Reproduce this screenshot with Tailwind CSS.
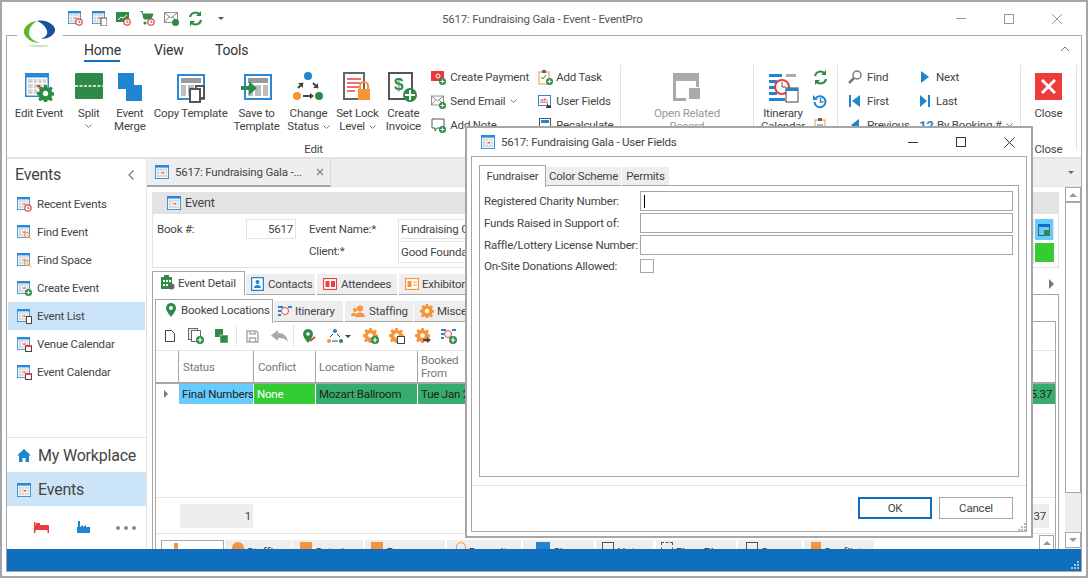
<!DOCTYPE html>
<html lang="en">
<head>
<meta charset="UTF-8">
<title>5617: Fundraising Gala - Event - EventPro</title>
<script src="https://cdn.jsdelivr.net/npm/@tailwindcss/browser@4"></script>
</head>
<body class="bg-white">
<svg width="0" height="0" class="absolute">
  <defs>
    <symbol id="cal" viewBox="0 0 16 16">
      <rect x="0.5" y="0.5" width="15" height="15" fill="#fff" stroke="#2b88d8"/>
      <rect x="0" y="0" width="16" height="3" fill="#2b88d8"/>
      <path d="M2 4h12v10H2z" fill="#d2d2d2"/>
      <path d="M2 7h12M2 10.500h12M5.500 4v10M8.500 4v10M11.500 4v10" stroke="#fff" stroke-width="0.8"/>
      <rect x="8" y="8" width="2" height="1.500" fill="#e84040"/>
    </symbol>
    <symbol id="plus" viewBox="0 0 10 10">
      <circle cx="5" cy="5" r="5" fill="#2e8b47"/>
      <path d="M5 2v6M2 5h6" stroke="#fff" stroke-width="1.500"/>
    </symbol>
    <symbol id="clock" viewBox="0 0 10 10">
      <circle cx="5" cy="5" r="4" fill="#fff" stroke="#e84040" stroke-width="1.500"/>
      <path d="M5 3v2.500h2" stroke="#555" fill="none"/>
    </symbol>
    <symbol id="frame" viewBox="0 0 28 26">
      <rect x="1" y="1" width="26" height="24" fill="#fff" stroke="#2b88d8" stroke-width="2"/>
      <rect x="4" y="4" width="20" height="5" fill="#9a9a9a"/>
      <path d="M4 11h5v11H4zM11 11h6v11h-6zM19 11h5v11h-5z" fill="#bdbdbd"/>
    </symbol>
    <symbol id="gear" viewBox="0 0 16 16">
      <path d="M6.700 0h2.600l.4 2.200 1.500.6 1.900-1.300 1.800 1.800-1.300 1.900.6 1.500 2.200.4v2.600l-2.200.4-.6 1.500 1.300 1.900-1.800 1.800-1.900-1.300-1.500.6-.4 2.200H6.700l-.4-2.200-1.500-.6-1.900 1.300-1.800-1.800 1.300-1.900-.6-1.500L0 9.300V6.700l2.200-.4.6-1.500-1.300-1.900 1.800-1.800 1.900 1.300 1.500-.6z"/>
      <circle cx="8" cy="8" r="2.500" fill="#fff"/>
    </symbol>
    <symbol id="mail" viewBox="0 0 16 12">
      <rect x="0.500" y="0.500" width="15" height="11" fill="#fff" stroke="#777"/>
      <path d="M1 1l7 5.500L15 1M1 11l5-6M15 11l-5-6" stroke="#777" fill="none"/>
    </symbol>
  </defs>
</svg>

<div class="relative w-[1088px] h-[578px] overflow-hidden border-2 border-[#a6a6a6] bg-white text-[11.500px] tracking-[-0.2px] leading-[14px] text-[#444] font-[Roboto,sans-serif]">

  <!-- title bar -->
  <div class="flex items-center h-[33px] pl-[66px]">
    <div class="flex items-center gap-[9px] h-[33px] -mt-[1px]">
      <svg width="15" height="15" viewBox="0 0 15 15"><use href="#cal" width="13" height="13"/><use href="#clock" x="7" y="7" width="8" height="8"/></svg>
      <svg width="15" height="15" viewBox="0 0 15 15"><use href="#cal" width="13" height="13"/><rect x="9" y="7" width="6" height="8" fill="#fff" stroke="#555"/></svg>
      <svg width="15" height="15" viewBox="0 0 15 15"><rect y="1" width="13" height="10" fill="#2e8b47"/><path d="M2 9l3-3 2 1 4-3" stroke="#fff" fill="none"/><use href="#clock" x="7" y="7" width="8" height="8"/></svg>
      <svg width="15" height="15" viewBox="0 0 15 15"><path d="M0 0h2l2 8h7l2-5H4" fill="#2e8b47" stroke="#2e8b47"/><circle cx="5" cy="12" r="1.500" fill="#2e8b47"/><use href="#clock" x="7" y="7" width="8" height="8"/></svg>
      <svg width="15" height="15" viewBox="0 0 15 15"><use href="#mail" width="14" height="11" y="1"/><circle cx="11.500" cy="11.500" r="3.500" fill="#2e8b47"/></svg>
      <svg width="15" height="15" viewBox="0 0 15 15" fill="none" stroke="#2e8b47" stroke-width="2"><path d="M2 6a5.500 5.500 0 0 1 10-2"/><path d="M13 9a5.500 5.500 0 0 1-10 2"/><path d="M13 0v5H8zM2 15v-5h5z" fill="#2e8b47" stroke="none"/></svg>
    </div>
    <span class="ml-[15px] w-0 h-0 border-x-[3px] border-x-transparent border-t-[3px] border-t-[#555]"></span>
    <span class="ml-[218px] text-[#555]">5617: Fundraising Gala - Event - EventPro</span>
    <div class="ml-auto flex items-center gap-[38px] pr-[24px] h-[33px]">
      <span class="w-[10px] h-px bg-[#999]"></span>
      <span class="w-[10px] h-[10px] border border-[#999]"></span>
      <svg width="10" height="10" viewBox="0 0 10 10" stroke="#999"><path d="M0 0l10 10M10 0L0 10"/></svg>
    </div>
  </div>

  <!-- logo -->
  <div class="absolute left-[15px] top-[11px] w-[46px] h-[42px] rounded-full bg-white flex items-center justify-center">
    <svg width="34" height="30" viewBox="0 0 34 30">
      <path d="M14 2C5 3 0 9 1 14c1 5 8 10 16 10-6-2-11-5-11-10 0-5 4-10 8-12z" fill="#5cb531"/>
      <path d="M14 2c8-2 17 3 18 8 1 5-6 10-14 10 4-2 7-4 6-8-1-4-5-8-10-10z" fill="#1d4f9c"/>
      <path d="M9 10h13l-3 5H8z" fill="#fff"/>
      <path d="M5 26h22c-6 3-16 3-22 0z" fill="#c9e3b8"/>
    </svg>
  </div>

  <!-- main frame -->
  <div class="ml-[4px] mr-[4px] w-[1076px] h-[537px] border border-[#a6a6a6] flex flex-col">

    <!-- ribbon tabs -->
    <div class="flex h-[29px] pl-[77px] text-[14px] text-[#333] shrink-0">
      <div class="w-[36px] h-[26px] pt-[6px] border-b-2 border-[#106ebe] leading-[16px] text-center">Home</div>
      <div class="ml-[34px] w-[27px] pt-[6px] leading-[16px] text-center">View</div>
      <div class="ml-[34px] w-[32px] pt-[6px] leading-[16px] text-center">Tools</div>
      <svg class="ml-auto mr-[11px] mt-[10px]" width="10" height="6" viewBox="0 0 10 6" fill="none" stroke="#777"><path d="M1 5l4-4 4 4"/></svg>
    </div>

    <!-- ribbon -->
    <div class="flex h-[92px] shrink-0 overflow-hidden leading-[13px]">

      <!-- edit group -->
      <div class="w-[614px] h-[85px] flex flex-col border-r border-[#e3e3e3]">
        <div class="flex h-[72px] shrink-0">
          <div class="w-[64px] flex flex-col items-center pt-[7px]">
            <svg width="34" height="32" viewBox="0 0 34 32"><use href="#cal" x="2" y="1" width="26" height="24"/><use href="#gear" x="15" y="13" width="17" height="17" fill="#2e8b47"/></svg>
            <div class="mt-[3px] text-center">Edit Event</div>
          </div>
          <div class="w-[36px] flex flex-col items-center pt-[7px]">
            <svg width="30" height="32" viewBox="0 0 30 32"><rect x="1" y="1" width="28" height="26" rx="1" fill="#2e8b47"/><path d="M1 14h28" stroke="#fff" stroke-width="1.500" stroke-dasharray="3 1.500"/></svg>
            <div class="mt-[3px] text-center">Split</div>
            <svg class="mt-[4px]" width="7" height="4" viewBox="0 0 7 4" fill="none" stroke="#777"><path d="M0.500 0.500l3 3 3-3"/></svg>
          </div>
          <div class="w-[46px] flex flex-col items-center pt-[7px]">
            <svg width="26" height="32" viewBox="0 0 26 32"><rect x="1" y="1" width="16" height="16" fill="#1f86cf"/><rect x="9" y="13" width="16" height="16" fill="#1f86cf"/></svg>
            <div class="mt-[3px] text-center">Event<br>Merge</div>
          </div>
          <div class="w-[76px] flex flex-col items-center pt-[7px]">
            <svg width="32" height="32" viewBox="0 0 32 32"><use href="#frame" x="2" y="2" width="28" height="26"/><rect x="21" y="14" width="8" height="12" fill="#fff" stroke="#555" stroke-width="2"/><rect x="15" y="17" width="10" height="13" fill="#fff" stroke="#555" stroke-width="2"/></svg>
            <div class="mt-[3px] text-center whitespace-nowrap">Copy Template</div>
          </div>
          <div class="w-[56px] flex flex-col items-center pt-[7px]">
            <svg width="32" height="32" viewBox="0 0 32 32"><use href="#frame" x="3" y="2" width="28" height="26"/><path d="M0 14h8V9l8 7-8 7v-5H0z" fill="#2e8b47"/></svg>
            <div class="mt-[3px] text-center">Save to<br>Template</div>
          </div>
          <div class="w-[48px] flex flex-col items-center pt-[7px]">
            <svg width="30" height="32" viewBox="0 0 30 32"><circle cx="15" cy="4" r="4" fill="#1f86cf"/><circle cx="4" cy="24" r="4" fill="#f7943a"/><circle cx="26" cy="24" r="4" fill="#2e8b47"/><path d="M5 16l5-5M20 11l5 5M10 24h9" stroke="#444" stroke-width="2" fill="none"/><path d="M5 11h5v5zM25 11v5h-5zM17 21v6l4-3z" fill="#444"/></svg>
            <div class="mt-[3px] text-center">Change<br>Status <svg class="inline ml-[1px] align-[1px]" width="7" height="4" viewBox="0 0 7 4" fill="none" stroke="#777"><path d="M0.500 0.500l3 3 3-3"/></svg></div>
          </div>
          <div class="w-[50px] flex flex-col items-center pt-[7px]">
            <svg width="28" height="32" viewBox="0 0 28 32"><rect x="1" y="1" width="20" height="26" fill="#fff" stroke="#666" stroke-width="2"/><path d="M4 7h14M4 11h14M4 15h14M4 19h8" stroke="#e84040" stroke-width="1.500"/><rect x="15" y="17" width="12" height="11" fill="#f7943a"/><path d="M17 17v-3a4 4 0 0 1 8 0v3" fill="none" stroke="#f7943a" stroke-width="2"/></svg>
            <div class="mt-[3px] text-center">Set Lock<br>Level <svg class="inline ml-[1px] align-[1px]" width="7" height="4" viewBox="0 0 7 4" fill="none" stroke="#777"><path d="M0.500 0.500l3 3 3-3"/></svg></div>
          </div>
          <div class="w-[42px] flex flex-col items-center pt-[7px]">
            <svg width="30" height="32" viewBox="0 0 30 32"><rect x="1" y="1" width="23" height="26" fill="#fff" stroke="#555" stroke-width="2"/><text x="6" y="18" font-size="17" font-weight="700" fill="#2e8b47" font-family="Liberation Sans">$</text><circle cx="22" cy="23" r="7" fill="#2e8b47"/><path d="M22 18v10M17 23h10" stroke="#fff" stroke-width="2"/></svg>
            <div class="mt-[3px] text-center">Create<br>Invoice</div>
          </div>
          <div class="ml-[7px] w-[107px] flex flex-col gap-[10px] pt-[5px]">
            <div class="flex items-center h-[14px] gap-[4px] whitespace-nowrap"><svg width="15" height="15" viewBox="0 0 15 15"><rect y="1" width="13" height="10" fill="#e93a3a"/><circle cx="7" cy="6" r="2" fill="none" stroke="#fff"/><use href="#plus" x="8" y="8" width="7" height="7"/></svg>Create Payment</div>
            <div class="flex items-center h-[14px] gap-[4px] whitespace-nowrap"><svg width="15" height="15" viewBox="0 0 15 15"><use href="#mail" width="13" height="11" y="1"/><use href="#plus" x="8" y="8" width="7" height="7"/></svg>Send Email <svg class="ml-[1px]" width="7" height="4" viewBox="0 0 7 4" fill="none" stroke="#777"><path d="M0.500 0.500l3 3 3-3"/></svg></div>
            <div class="flex items-center h-[14px] gap-[4px] whitespace-nowrap"><svg width="15" height="15" viewBox="0 0 15 15"><path d="M1 1h12v9H6l-2 3v-3H1z" fill="#fff" stroke="#555"/><use href="#plus" x="8" y="8" width="7" height="7"/></svg>Add Note</div>
          </div>
          <div class="w-[82px] flex flex-col gap-[10px] pt-[5px]">
            <div class="flex items-center h-[14px] gap-[3px] whitespace-nowrap"><svg width="15" height="15" viewBox="0 0 15 15"><rect x="1" y="2" width="10" height="12" fill="#fff" stroke="#f7943a"/><rect x="4" y="0" width="4" height="3" fill="#666"/><path d="M3 7l2 2 3-4" stroke="#2e8b47" fill="none"/><use href="#plus" x="8" y="8" width="7" height="7"/></svg>Add Task</div>
            <div class="flex items-center h-[14px] gap-[3px] whitespace-nowrap"><svg width="15" height="15" viewBox="0 0 15 15"><rect x="0.500" y="1.500" width="12" height="10" fill="#fff" stroke="#2b88d8"/><text x="2" y="9" font-size="7" fill="#e84040" font-family="Liberation Sans">ab</text><path d="M10 8v4h3v2H8z" fill="#333"/></svg>User Fields</div>
            <div class="flex items-center h-[14px] gap-[3px] whitespace-nowrap"><svg width="15" height="15" viewBox="0 0 15 15"><rect x="1.500" y="0.500" width="11" height="13" fill="#fff" stroke="#555"/><rect x="3" y="2" width="8" height="3" fill="#1f86cf"/></svg>Recalculate</div>
          </div>
        </div>
        <div class="h-[13px] pt-[5px] text-center leading-[14px]">Edit</div>
      </div>

      <!-- open related group -->
      <div class="w-[133px] h-[85px] flex flex-col items-center pt-[7px] border-r border-[#e3e3e3] text-[#999]">
        <svg width="32" height="32" viewBox="0 0 32 32"><path d="M2 1h26v8H2z" fill="#aaa"/><path d="M2 9h3v17h10v3H2zM25 9h3v6h-3z" fill="#aaa"/><rect x="18" y="16" width="11" height="11" fill="#aaa"/></svg>
        <div class="mt-[3px] text-center">Open Related<br>Record</div>
      </div>

      <!-- itinerary group -->
      <div class="w-[84px] h-[85px] flex border-r border-[#e3e3e3]">
        <div class="w-[58px] flex flex-col items-center pt-[7px]">
          <svg width="34" height="32" viewBox="0 0 34 32"><path d="M3 2h13v3H3zM3 8h8v3H3zM3 14h8v3H3zM3 20h8v3H3zM3 26h16v3H3z" fill="#1f86cf"/><path d="M20 2h10v3H20z" fill="#aaa"/><circle cx="16" cy="15" r="7" fill="#fff" stroke="#e84040" stroke-width="2"/><path d="M16 10v5h4" stroke="#555" fill="none"/><rect x="20" y="16" width="12" height="14" fill="#fff" stroke="#444"/><rect x="20" y="16" width="12" height="3" fill="#1f86cf"/></svg>
          <div class="mt-[3px] text-center">Itinerary<br>Calendar</div>
        </div>
        <div class="flex flex-col gap-[9px] pt-[5px] pl-[1px]">
          <svg width="15" height="15" viewBox="0 0 15 15" fill="none" stroke="#2e8b47" stroke-width="2"><path d="M2 6a5.500 5.500 0 0 1 10-2"/><path d="M13 9a5.500 5.500 0 0 1-10 2"/><path d="M13 0v5H8zM2 15v-5h5z" fill="#2e8b47" stroke="none"/></svg>
          <svg width="15" height="15" viewBox="0 0 15 15" fill="none" stroke="#1f86cf" stroke-width="2"><path d="M3 4a5.500 5.500 0 1 1-1.500 4"/><path d="M7.500 4v4h3" stroke-width="1.500"/><path d="M0 1v5h5z" fill="#1f86cf" stroke="none"/></svg>
          <svg width="15" height="15" viewBox="0 0 15 15"><rect x="2" y="2" width="10" height="12" fill="#fff" stroke="#f7943a"/><rect x="5" y="0" width="4" height="3" fill="#666"/><path d="M4 7h6M4 10h6" stroke="#666"/></svg>
        </div>
      </div>

      <!-- navigation group -->
      <div class="w-[183px] h-[85px] flex border-r border-[#e3e3e3] pl-[10px]">
        <div class="w-[71px] flex flex-col gap-[10px] pt-[5px]">
          <div class="flex items-center h-[14px] gap-[5px]"><svg width="14" height="14" viewBox="0 0 14 14" fill="none" stroke="#777" stroke-width="1.500"><circle cx="9" cy="5" r="4"/><path d="M6 8l-5 5" stroke-width="2.500"/></svg>Find</div>
          <div class="flex items-center h-[14px] gap-[5px]"><svg width="14" height="14" viewBox="0 0 14 14" fill="#1f86cf"><path d="M1 1h2v12H1zM12 1v12L4 7z"/></svg>First</div>
          <div class="flex items-center h-[14px] gap-[5px]"><svg width="14" height="14" viewBox="0 0 14 14" fill="#1f86cf"><path d="M11 1v12L3 7z"/></svg>Previous</div>
        </div>
        <div class="flex-1 flex flex-col gap-[10px] pt-[5px]">
          <div class="flex items-center h-[14px] gap-[5px]"><svg width="12" height="14" viewBox="0 0 12 14" fill="#1f86cf"><path d="M2 1v12l8-6z"/></svg>Next</div>
          <div class="flex items-center h-[14px] gap-[5px]"><svg width="12" height="14" viewBox="0 0 12 14" fill="#1f86cf"><path d="M1 1v12l7-6zM9 1h2v12H9z"/></svg>Last</div>
          <div class="flex items-center h-[14px] gap-[2px] whitespace-nowrap"><b class="text-[#1f86cf] text-[13px] w-[16px]">12</b>By Booking # <svg class="ml-[2px]" width="7" height="4" viewBox="0 0 7 4" fill="none" stroke="#777"><path d="M0.500 0.500l3 3 3-3"/></svg></div>
        </div>
      </div>

      <!-- close group -->
      <div class="w-[56px] h-[85px] flex flex-col items-center pt-[7px] border-r border-[#e3e3e3]">
        <div class="w-[27px] h-[27px] mt-[1px] mb-[4px] bg-[#ee3b3b] flex items-center justify-center shrink-0">
          <svg width="15" height="15" viewBox="0 0 15 15" stroke="#fff" stroke-width="3"><path d="M1 1l13 13M14 1L1 14"/></svg>
        </div>
        <div class="mt-[3px] shrink-0">Close</div>
        <div class="mt-[23px] shrink-0">Close</div>
      </div>
    </div>

    <!-- body -->
    <div class="flex h-[392px] border-t-2 border-[#e3e3e3] overflow-hidden shrink-0">

      <!-- navigation sidebar -->
      <div class="w-[140px] flex flex-col border-r border-[#e3e3e3] shrink-0">
        <div class="flex items-center justify-between h-[31px] pl-[8px] pr-[12px] text-[16px] text-[#444]">Events <svg width="6" height="10" viewBox="0 0 6 10" fill="none" stroke="#777" stroke-width="1.200"><path d="M5.500 0.500L1 5l4.500 4.500"/></svg></div>
        <div class="flex flex-col">
          <div class="flex items-center gap-[5px] h-[28px] mx-[1px] pl-[9px]"><svg width="15" height="15" viewBox="0 0 15 15"><use href="#cal" width="13" height="13"/><use href="#clock" x="7" y="7" width="8" height="8"/></svg>Recent Events</div>
          <div class="flex items-center gap-[5px] h-[28px] mx-[1px] pl-[9px]"><svg width="15" height="15" viewBox="0 0 15 15"><use href="#cal" width="13" height="13"/><circle cx="10" cy="10" r="2.500" fill="none" stroke="#f7943a"/><path d="M12 12l2.500 2.500" stroke="#f7943a"/></svg>Find Event</div>
          <div class="flex items-center gap-[5px] h-[28px] mx-[1px] pl-[9px]"><svg width="15" height="15" viewBox="0 0 15 15"><use href="#cal" width="13" height="13"/><circle cx="10" cy="10" r="2.500" fill="none" stroke="#f7943a"/><path d="M12 12l2.500 2.500" stroke="#f7943a"/></svg>Find Space</div>
          <div class="flex items-center gap-[5px] h-[28px] mx-[1px] pl-[9px]"><svg width="15" height="15" viewBox="0 0 15 15"><use href="#cal" width="13" height="13"/><use href="#plus" x="8" y="8" width="7" height="7"/></svg>Create Event</div>
          <div class="flex items-center gap-[5px] h-[28px] mx-[1px] pl-[9px] bg-[#cce4f7]"><svg width="15" height="15" viewBox="0 0 15 15"><use href="#cal" width="13" height="13"/><rect x="9.500" y="7.500" width="5" height="7" fill="#fff" stroke="#444"/></svg>Event List</div>
          <div class="flex items-center gap-[5px] h-[28px] mx-[1px] pl-[9px]"><svg width="15" height="15" viewBox="0 0 15 15"><use href="#cal" width="13" height="13"/><rect x="8.500" y="8.500" width="6" height="6" fill="#fff" stroke="#444"/><rect x="8" y="8" width="7" height="2" fill="#e84040"/></svg>Venue Calendar</div>
          <div class="flex items-center gap-[5px] h-[28px] mx-[1px] pl-[9px]"><svg width="15" height="15" viewBox="0 0 15 15"><use href="#cal" width="13" height="13"/><rect x="8.500" y="8.500" width="6" height="6" fill="#fff" stroke="#444"/><rect x="8" y="8" width="7" height="2" fill="#e84040"/></svg>Event Calendar</div>
        </div>
        <div class="mt-auto border-t border-[#e3e3e3] text-[16px] leading-[20px]">
          <div class="flex items-center gap-[7px] h-[34px] pl-[10px] pt-[1px]"><svg width="14" height="13" viewBox="0 0 14 13" fill="#1f86cf"><path d="M7 0l7 6.500h-2V13H8.500V9h-3v4H2V6.500H0z"/></svg>My Workplace</div>
          <div class="flex items-center gap-[7px] h-[34px] pl-[10px] pt-[1px] bg-[#cce4f7]"><svg width="14" height="14"><use href="#cal" width="14" height="14"/></svg>Events</div>
        </div>
        <div class="flex items-center h-[43px] pl-[27px] gap-[28px]">
          <svg width="15" height="11" viewBox="0 0 15 11" fill="#ee3b3b"><path d="M0 0h1.500v3H14a1 1 0 0 1 1 1v7h-1.500V8h-12v3H0z"/><rect x="2" y="1" width="4" height="2"/></svg>
          <svg width="13" height="14" viewBox="0 0 13 14" fill="#1f86cf"><path d="M1 0h2v6l3-2v2l3-2v2h4v6H0V6h1z"/></svg>
          <div class="-ml-[2px] flex gap-[4px]"><span class="w-[4px] h-[4px] rounded-full bg-[#888]"></span><span class="w-[4px] h-[4px] rounded-full bg-[#888]"></span><span class="w-[4px] h-[4px] rounded-full bg-[#888]"></span></div>
        </div>
      </div>

      <!-- document area -->
      <div class="flex-1 flex flex-col min-w-0">
        <div class="flex h-[28px] bg-[#eeeeee] shrink-0">
          <div class="flex items-center w-[184px] h-[28px] border-r border-[#d8d8d8] pl-[8px] border-b-2 border-b-[#a6a6a6] whitespace-nowrap text-[#444]">
            <svg class="mr-[6px] shrink-0" width="14" height="14"><use href="#cal" width="14" height="14"/></svg>5617: Fundraising Gala -...
            <svg class="ml-[14px] shrink-0" width="8" height="8" viewBox="0 0 8 8" stroke="#888" stroke-width="1.300"><path d="M1 1l6 6M7 1L1 7"/></svg>
          </div>
          <div class="flex-1 flex items-center justify-end pr-[7px] border-b border-[#e3e3e3]"><span class="w-0 h-0 border-x-[3.500px] border-x-transparent border-t-[3.500px] border-t-[#666]"></span></div>
        </div>

        <div class="flex flex-1 min-h-0">
          <div class="w-[912px] pl-[5px] pt-[5px] flex flex-col min-h-0 shrink-0">

            <!-- event header panel -->
            <div class="h-[76px] border border-[#e3e3e3] border-t-0 shrink-0">
              <div class="flex items-center h-[22px] bg-[#e3e3e3] pl-[14px] text-[12.500px]"><svg class="mr-[4px]" width="14" height="14"><use href="#cal" width="14" height="14"/></svg>Event</div>
              <div class="flex pt-[5px] pl-[4px]">
                <div class="w-[89px] pt-[3px]">Book #:</div>
                <div class="w-[50px] h-[20px] border border-[#e3e3e3] text-right pr-[2px] leading-[18px]">5617</div>
                <div class="ml-[13px] w-[89px] flex flex-col">
                  <div class="h-[22px] pt-[3px]">Event Name:*</div>
                  <div class="pt-[3px]">Client:*</div>
                </div>
                <div class="flex flex-col gap-[2px] w-[636px]">
                  <div class="h-[20px] border border-[#e3e3e3] pl-[2px] leading-[18px]">Fundraising Gala</div>
                  <div class="h-[22px] border border-[#e3e3e3] pl-[2px] leading-[20px]">Good Foundation</div>
                </div>
                <div class="flex flex-col gap-[3px] ml-[1px] w-[20px]">
                  <div class="h-[21px] w-[19px] bg-[#66ccff] flex items-center justify-center border-r border-[#e3e3e3]"><svg width="12" height="12" viewBox="0 0 12 12"><rect x="0.500" y="0.500" width="11" height="11" fill="none" stroke="#555"/><rect width="12" height="3" fill="#106ebe"/><rect x="6" y="6" width="6" height="6" fill="#2e8b47"/></svg></div>
                  <div class="h-[19px] w-[19px] bg-[#33cc33]"></div>
                </div>
              </div>
            </div>

            <!-- detail tabs -->
            <div class="flex mt-[3px] h-[24px] items-end shrink-0">
              <div class="flex items-center h-[24px] w-[93px] border border-b-0 border-[#a6a6a6] bg-white pl-[8px] pb-[2px] gap-[3px] whitespace-nowrap"><svg class="shrink-0" width="14" height="15" viewBox="0 0 14 15"><path d="M0 2h3V0h5v2h3v12H0z" fill="#2e8b47"/><path d="M2 5h2v2H2zM5 5h2v2H5zM8 5h2v2H8zM2 9h2v2H2zM5 9h2v2H5z" fill="#fff"/><circle cx="10.500" cy="11.500" r="3" fill="#666"/></svg>Event Detail</div>
              <div class="flex items-center h-[21px] w-[69px] ml-px bg-[#eeeeee] pl-[5px] gap-[4px] whitespace-nowrap border-b border-[#a6a6a6]"><svg class="shrink-0" width="13" height="14" viewBox="0 0 13 14"><rect x="0.500" y="0.500" width="12" height="13" rx="1" fill="#fff" stroke="#1f86cf" stroke-width="1.500"/><circle cx="6.500" cy="5" r="2" fill="#1f86cf"/><path d="M3 11c0-4 7-4 7 0z" fill="#1f86cf"/></svg>Contacts</div>
              <div class="flex items-center h-[21px] w-[80px] ml-[2px] bg-[#eeeeee] pl-[6px] gap-[4px] whitespace-nowrap border-b border-[#a6a6a6]"><svg class="shrink-0" width="14" height="12" viewBox="0 0 14 12"><rect x="0.500" y="0.500" width="13" height="11" fill="#fff" stroke="#e84040" stroke-width="1.200"/><rect x="2.500" y="3" width="4" height="6" fill="#e84040"/><rect x="8" y="3" width="4" height="6" fill="#e84040"/></svg>Attendees</div>
              <div class="flex items-center h-[21px] w-[80px] ml-[2px] bg-[#eeeeee] pl-[6px] gap-[3px] whitespace-nowrap border-b border-[#a6a6a6]"><svg class="shrink-0" width="14" height="12" viewBox="0 0 14 12"><rect x="0.500" y="0.500" width="13" height="11" fill="#fff" stroke="#f7943a" stroke-width="1.200"/><rect x="2.500" y="3" width="4" height="6" fill="#f7943a"/><path d="M8 4h4M8 7h4" stroke="#f7943a"/></svg>Exhibitors</div>
              <div class="flex-1 h-[21px] flex items-center justify-end pr-[5px] border-b border-[#a6a6a6]"><span class="w-0 h-0 border-y-[5px] border-y-transparent border-l-[5px] border-l-[#777]"></span></div>
            </div>

            <!-- detail panel -->
            <div class="flex-1 min-h-0 border-x border-[#a6a6a6] pl-[2px] pr-[2px] pt-[4px] flex flex-col">
              <div class="flex h-[23px] items-end shrink-0">
                <div class="flex items-center h-[24px] w-[118px] border border-b-0 border-[#a6a6a6] bg-white pl-[10px] pb-[3px] gap-[5px] whitespace-nowrap relative top-px"><svg class="shrink-0" width="10" height="14" viewBox="0 0 10 14"><path d="M5 0a5 5 0 0 1 5 5c0 3-5 9-5 9S0 8 0 5a5 5 0 0 1 5-5z" fill="#2e8b47"/><circle cx="5" cy="5" r="2" fill="#fff"/></svg>Booked Locations</div>
                <div class="flex items-center h-[21px] w-[69px] ml-px bg-[#eeeeee] pl-[4px] gap-[3px] whitespace-nowrap border-b border-[#a6a6a6]"><svg class="shrink-0" width="14" height="13" viewBox="0 0 14 13"><path d="M0 1h5v2H0zM0 5h3v2H0zM0 9h3v2H0zM10 1h4v2h-4z" fill="#1f86cf"/><circle cx="7" cy="6" r="3.500" fill="#fff" stroke="#e84040"/></svg>Itinerary</div>
                <div class="flex items-center h-[21px] w-[68px] ml-[2px] bg-[#eeeeee] pl-[6px] gap-[3px] whitespace-nowrap border-b border-[#a6a6a6]"><svg class="shrink-0" width="15" height="13" viewBox="0 0 15 13" fill="#f7943a"><circle cx="9" cy="3.500" r="3"/><path d="M4 12c0-6 10-6 10 0z"/><circle cx="4" cy="5" r="2"/><path d="M0 11c0-4 5-4 5-2l-1 2z"/></svg>Staffing</div>
                <div class="flex items-center h-[21px] w-[100px] ml-[1px] bg-[#eeeeee] pl-[6px] gap-[3px] whitespace-nowrap border-b border-[#a6a6a6]"><svg class="shrink-0" width="14" height="14"><use href="#gear" width="14" height="14" fill="#f7943a"/></svg>Miscellaneous</div>
                <div class="flex-1 h-[21px] border-b border-[#a6a6a6]"></div>
              </div>

              <div class="flex-1 min-h-0 flex flex-col border-x border-[#a6a6a6]">
                <!-- toolbar -->
                <div class="flex items-center h-[28px] pl-[8px] shrink-0">
                  <svg width="12" height="14" viewBox="0 0 12 14" fill="#fff" stroke="#444"><path d="M1.500 1.500h6l3 3v8h-9z"/></svg>
                  <svg class="ml-[12px]" width="16" height="16" viewBox="0 0 16 16"><rect x="0.500" y="0.500" width="9" height="11" fill="#eee" stroke="#666"/><rect x="3.500" y="2.500" width="9" height="11" fill="#fff" stroke="#666"/><use href="#plus" x="8" y="8" width="8" height="8"/></svg>
                  <svg class="ml-[11px]" width="13" height="14" viewBox="0 0 13 14"><rect width="8" height="8" fill="#2e8b47"/><rect x="5" y="6" width="8" height="8" fill="#2e8b47" stroke="#fff" stroke-width="0.500"/></svg>
                  <span class="w-px h-[22px] bg-[#e3e3e3] ml-[8px]"></span>
                  <svg class="ml-[9px]" width="13" height="13" viewBox="0 0 13 13" fill="none" stroke="#aaa" stroke-width="1.500"><path d="M1 1h9l2 2v9H1zM4 1v3h5V1M3.500 12V8h6v4"/></svg>
                  <svg class="ml-[12px]" width="17" height="12" viewBox="0 0 17 12" fill="#aaa"><path d="M7 0v3c6 0 9 3 10 9-2-3-5-4-10-4v3L0 5.500z"/></svg>
                  <span class="w-px h-[22px] bg-[#e3e3e3] ml-[5px]"></span>
                  <svg class="ml-[9px]" width="14" height="15" viewBox="0 0 14 15"><path d="M5 0a5 5 0 0 1 5 5c0 3-5 9-5 9S0 8 0 5a5 5 0 0 1 5-5z" fill="#2e8b47"/><circle cx="5" cy="5" r="1.800" fill="#fff"/><path d="M7 12l5-4" stroke="#e84040" stroke-width="2"/></svg>
                  <div class="ml-[10px] flex items-center gap-[2px]"><svg width="16" height="14" viewBox="0 0 16 14"><circle cx="8" cy="2" r="2" fill="#1f86cf"/><circle cx="2" cy="12" r="2" fill="#f7943a"/><circle cx="14" cy="12" r="2" fill="#2e8b47"/><path d="M3 8l3-3M10 5l3 3M5 12h6" stroke="#444"/></svg><span class="w-0 h-0 border-x-[3px] border-x-transparent border-t-[3px] border-t-[#444]"></span></div>
                  <svg class="ml-[12px]" width="16" height="16" viewBox="0 0 16 16"><use href="#gear" width="15" height="15" fill="#f7943a"/><use href="#plus" x="8" y="8" width="8" height="8"/></svg>
                  <svg class="ml-[10px]" width="16" height="16" viewBox="0 0 16 16"><use href="#gear" width="15" height="15" fill="#f7943a"/><rect x="8.500" y="8.500" width="7" height="7" fill="#fff" stroke="#444"/></svg>
                  <svg class="ml-[10px]" width="16" height="16" viewBox="0 0 16 16"><use href="#gear" width="15" height="15" fill="#f7943a"/><path d="M8 11h4V9l4 3-4 3v-2H8z" fill="#444"/></svg>
                  <svg class="ml-[10px]" width="16" height="16" viewBox="0 0 16 16"><path d="M0 1h5v2H0zM0 5h3v2H0zM0 9h3v2H0zM11 1h4v2h-4z" fill="#1f86cf"/><circle cx="7" cy="6" r="3.500" fill="#fff" stroke="#e84040"/><use href="#plus" x="8" y="8" width="8" height="8"/></svg>
                </div>

                <!-- grid -->
                <div class="flex h-[34px] border-t border-[#e3e3e3] border-b-2 border-b-[#a6a6a6] text-[#777] shrink-0">
                  <div class="w-[23px] border-r border-[#a6a6a6]"></div>
                  <div class="w-[75px] border-r border-[#a6a6a6] pl-[4px] flex items-center">Status</div>
                  <div class="w-[62px] border-r border-[#a6a6a6] pl-[4px] flex items-center">Conflict</div>
                  <div class="w-[102px] border-r border-[#a6a6a6] pl-[3px] flex items-center">Location Name</div>
                  <div class="pl-[3px] flex items-center leading-[13px]">Booked<br>From</div>
                </div>
                <div class="flex h-[20px] leading-[20px] shrink-0 text-[#222]">
                  <div class="w-[23px] flex items-center pl-[8px]"><span class="w-0 h-0 border-y-[4px] border-y-transparent border-l-[4px] border-l-[#777]"></span></div>
                  <div class="w-[75px] bg-[#66ccff] pl-[3px] border-r border-white whitespace-nowrap overflow-hidden">Final Numbers</div>
                  <div class="w-[62px] bg-[#33cc33] pl-[3px] border-r border-white text-white">None</div>
                  <div class="w-[102px] bg-[#36ad6e] pl-[3px] border-r border-white">Mozart Ballroom</div>
                  <div class="flex-1 bg-[#36ad6e] px-[3px] flex justify-between"><span>Tue Jan 2, 2018</span><span>5.37</span></div>
                </div>
                <div class="flex-1"></div>
                <div class="flex items-center justify-between h-[37px] border-y border-[#e3e3e3] pl-[24px] pr-[6px] shrink-0">
                  <div class="w-[73px] h-[24px] bg-[#eeeeee] text-right pr-[2px] leading-[24px]">1</div>
                  <div class="w-[16px] h-[24px] bg-[#eeeeee] text-right pr-[3px] leading-[24px]">37</div>
                </div>
                <div class="flex h-[15px] shrink-0 overflow-hidden pl-[5px] pt-[6px] text-[#333] leading-[24px]">
                  <div class="w-[63px] h-[24px] border border-[#a6a6a6] text-center bg-white"><span class="inline-block w-[4px] h-[14px] bg-[#f7943a] mr-[7px]"></span>Sales</div>
                  <div class="w-[67px] h-[24px] bg-[#eeeeee] ml-px text-center"><span class="inline-block w-[12px] h-[14px] rounded-t-full bg-[#f7943a] mr-[3px]"></span>Staffing</div>
                  <div class="w-[70px] h-[24px] bg-[#eeeeee] ml-px text-center"><span class="inline-block w-[12px] h-[14px] bg-[#f7943a] mr-[3px]"></span>Catering</div>
                  <div class="w-[80px] h-[24px] bg-[#eeeeee] ml-[2px] text-center"><span class="inline-block w-[12px] h-[14px] bg-[#f7943a] mr-[3px]"></span>Resources</div>
                  <div class="w-[74px] h-[24px] bg-[#eeeeee] ml-[2px] text-center"><span class="inline-block w-[10px] h-[14px] rounded-full border border-[#f7943a] mr-[3px]"></span>Deposits</div>
                  <div class="w-[71px] h-[24px] bg-[#eeeeee] ml-[2px] text-center"><span class="inline-block w-[14px] h-[14px] bg-[#1f86cf] mr-[3px]"></span>Show</div>
                  <div class="w-[57px] h-[24px] bg-[#eeeeee] ml-[2px] text-center"><span class="inline-block w-[12px] h-[14px] border border-[#555] mr-[3px]"></span>Notes</div>
                  <div class="w-[80px] h-[24px] bg-[#eeeeee] ml-[3px] text-center"><span class="inline-block w-[12px] h-[14px] border border-dashed border-[#555] mr-[3px]"></span>Floor Plans</div>
                  <div class="w-[64px] h-[24px] bg-[#eeeeee] ml-[2px] text-center"><span class="inline-block w-[12px] h-[14px] border border-[#555] mr-[3px]"></span>Survey</div>
                  <div class="w-[70px] h-[24px] bg-[#eeeeee] ml-[2px] text-center"><span class="inline-block w-[10px] h-[14px] bg-[#f7943a] mr-[3px]"></span>Conflicts</div>
                  <div class="ml-auto mr-[1px] -mt-[5px] w-[15px] h-[15px] border border-[#a6a6a6] bg-white flex items-center justify-center"><span class="w-0 h-0 border-x-[4px] border-x-transparent border-b-[4px] border-b-[#999]"></span></div>
                </div>
              </div>
            </div>
          </div>

          <!-- scrollbar -->
          <div class="ml-[6px] w-[16px] flex flex-col bg-[#eeeeee]">
            <div class="h-[16px] border border-[#a6a6a6] border-b-2 bg-white flex items-center justify-center"><span class="w-0 h-0 border-x-[4px] border-x-transparent border-b-[4px] border-b-[#999]"></span></div>
            <div class="h-[290px] border-x border-b border-[#a6a6a6] bg-white"></div>
            <div class="mt-auto mb-[1px] h-[16px] border border-[#a6a6a6] bg-white flex items-center justify-center"><span class="w-0 h-0 border-x-[4px] border-x-transparent border-t-[4px] border-t-[#999]"></span></div>
          </div>
        </div>
      </div>
    </div>

    <!-- status bar -->
    <div class="flex justify-end items-end h-[22px] bg-[#106ebe] shrink-0 pr-[2px] pb-[2px]">
      <div class="grid grid-cols-3 gap-[1px] w-[8px]"><i></i><i></i><i class="h-[2px] bg-white/60"></i><i></i><i class="h-[2px] bg-white/60"></i><i class="h-[2px] bg-white/60"></i><i class="h-[2px] bg-white/60"></i><i class="h-[2px] bg-white/60"></i><i class="h-[2px] bg-white/60"></i></div>
    </div>
  </div>

  <!-- user fields dialog -->
  <div class="absolute left-[463px] top-[124px] w-[568px] h-[412px] border-2 border-[#a6a6a6] bg-white flex flex-col">
    <div class="flex items-center h-[28px] pl-[14px] shrink-0 text-[#444]">
      <svg class="mr-[6px]" width="14" height="14"><use href="#cal" width="14" height="14"/></svg>5617: Fundraising Gala - User Fields
      <div class="ml-auto flex items-center gap-[38px] pr-[16px]">
        <span class="w-[10px] h-px bg-[#333]"></span>
        <span class="w-[10px] h-[10px] border border-[#333]"></span>
        <svg width="11" height="11" viewBox="0 0 11 11" stroke="#333"><path d="M0.500 0.500l10 10M10.500 0.500l-10 10"/></svg>
      </div>
    </div>
    <div class="relative flex-1 mx-[4px] mb-[4px] border border-[#a6a6a6] flex flex-col">
      <div class="px-[7px] pt-[7px] flex-1 flex flex-col">
        <div class="flex h-[22px] items-end shrink-0">
          <div class="h-[22px] w-[67px] border border-b-0 border-[#a6a6a6] text-center leading-[21px] relative top-px bg-white">Fundraiser</div>
          <div class="h-[19px] w-[75px] bg-[#eeeeee] border-b border-[#a6a6a6] text-center leading-[19px]">Color Scheme</div>
          <div class="h-[19px] w-[47px] ml-px bg-[#eeeeee] border-b border-[#a6a6a6] text-center leading-[19px]">Permits</div>
          <div class="flex-1 border-b border-[#a6a6a6]"></div>
        </div>
        <div class="flex-1 border border-t-0 border-[#a6a6a6] pt-[5px] pl-[4px] pr-[5px] flex flex-col gap-[2px]">
          <div class="flex items-center h-[20px]"><label class="w-[156px] whitespace-nowrap">Registered Charity Number:</label><div class="flex-1 h-[20px] border border-[#a6a6a6] pl-[3px] flex items-center"><span class="w-px h-[13px] bg-black"></span></div></div>
          <div class="flex items-center h-[20px]"><label class="w-[156px] whitespace-nowrap">Funds Raised in Support of:</label><div class="flex-1 h-[20px] border border-[#a6a6a6]"></div></div>
          <div class="flex items-center h-[20px]"><label class="w-[156px] whitespace-nowrap">Raffle/Lottery License Number:</label><div class="flex-1 h-[20px] border border-[#a6a6a6]"></div></div>
          <div class="flex items-center h-[20px] -mt-[1px]"><label class="w-[156px] whitespace-nowrap">On-Site Donations Allowed:</label><div class="w-[14px] h-[14px] border border-[#a6a6a6]"></div></div>
        </div>
      </div>
      <div class="flex justify-end items-start gap-[7px] h-[46px] mt-[8px] pt-[11px] pr-[13px] border-t border-[#e3e3e3] shrink-0">
        <div class="w-[74px] h-[22px] border-2 border-[#106ebe] text-center leading-[18px]">OK</div>
        <div class="w-[74px] h-[22px] border border-[#a6a6a6] text-center leading-[20px]">Cancel</div>
      </div>
      <div class="absolute right-0 bottom-0 grid grid-cols-3 gap-[1px] w-[8px]"><i></i><i></i><i class="h-[2px] bg-[#bbb]"></i><i></i><i class="h-[2px] bg-[#bbb]"></i><i class="h-[2px] bg-[#bbb]"></i><i class="h-[2px] bg-[#bbb]"></i><i class="h-[2px] bg-[#bbb]"></i><i class="h-[2px] bg-[#bbb]"></i></div>
    </div>
  </div>
</div>
</body>
</html>
